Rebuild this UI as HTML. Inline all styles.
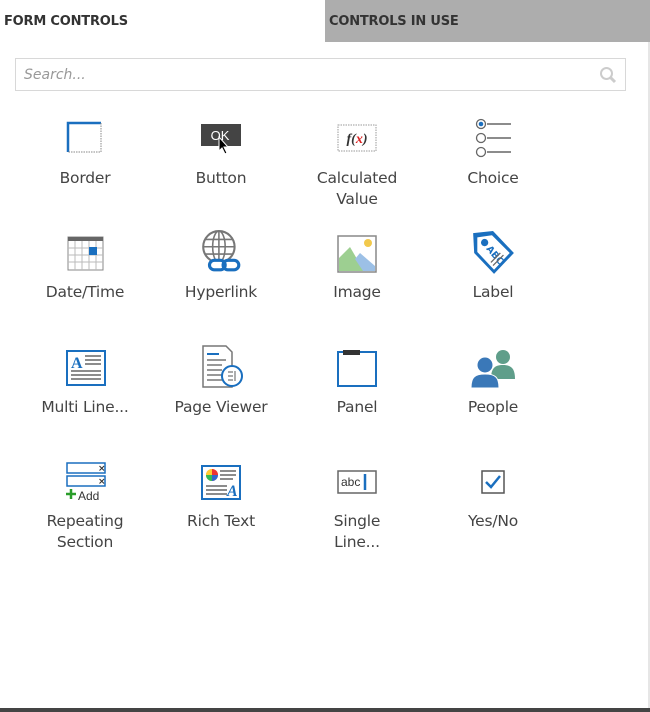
<!DOCTYPE html>
<html><head><meta charset="utf-8"><style>
body{margin:0;width:650px;height:712px;background:#fff;position:relative;overflow:hidden;font-family:"DejaVu Sans","Liberation Sans",sans-serif;}
.tab1{position:absolute;left:4px;top:14px;font-size:13px;font-weight:bold;color:#333;letter-spacing:-0.2px}
.tab2{position:absolute;left:325px;top:0;width:325px;height:42px;background:#adadad}
.tab2 span{position:absolute;left:4px;top:14px;font-size:13px;font-weight:bold;color:#333;letter-spacing:-0.2px}
.search{position:absolute;left:15px;top:58px;width:609px;height:31px;border:1px solid #d8d8d8}
.search span{position:absolute;left:8px;top:8px;font-size:14px;font-style:italic;color:#999}
.ic{position:absolute;width:136px;text-align:center}
.ic svg{display:block;margin:0 auto}
.lbl{position:absolute;width:136px;text-align:center;font-size:15.5px;color:#444;line-height:21px;letter-spacing:-0.2px}
.rb{position:absolute;left:648px;top:42px;width:2px;height:666px;background:#e6e6e6}
.bot{position:absolute;left:0;top:708px;width:650px;height:4px;background:#444}
</style></head><body>
<div class="tab1">FORM CONTROLS</div>
<div class="tab2"><span>CONTROLS IN USE</span></div>
<div class="search"><span>Search...</span>
<svg style="position:absolute;right:8px;top:7px" width="18" height="18" viewBox="0 0 18 18"><circle cx="7.5" cy="7.5" r="5.5" fill="none" stroke="#ccc" stroke-width="2"/><path d="M11.5 11.5L16 16" stroke="#ccc" stroke-width="3"/></svg></div>

<!-- row 1 -->
<div class="ic" style="left:17px;top:120px"><svg width="44" height="34" viewBox="0 0 40 34"><path d="M3 32V3H36" fill="none" stroke="#1a6fbf" stroke-width="2.5"/><path d="M36 3V32H3" fill="none" stroke="#888" stroke-width="1" stroke-dasharray="1.5 1"/></svg></div>
<div class="lbl" style="left:17px;top:168px">Border</div>
<div class="ic" style="left:153px;top:122px"><svg width="44" height="38" viewBox="0 0 44 38"><rect x="2" y="2" width="40" height="22" fill="#444"/><text x="21" y="18" font-size="13" fill="#fff" text-anchor="middle" font-family="Liberation Sans">OK</text><path d="M20 15L20 29L23 26L26 32L28 31L25 25L29 25Z" fill="#000" stroke="#fff" stroke-width="1"/></svg></div>
<div class="lbl" style="left:153px;top:168px">Button</div>
<div class="ic" style="left:289px;top:122px"><svg width="44" height="34" viewBox="0 0 44 34"><rect x="3" y="3" width="38" height="26" fill="#fff" stroke="#999" stroke-dasharray="1.5 1"/><text x="22" y="21" font-size="14" font-style="italic" font-weight="bold" text-anchor="middle" font-family="Liberation Serif" fill="#333">f(<tspan fill="#d22">x</tspan>)</text></svg></div>
<div class="lbl" style="left:289px;top:168px">Calculated<br>Value</div>
<div class="ic" style="left:425px;top:117px"><svg width="44" height="42" viewBox="0 0 44 42"><circle cx="10" cy="7" r="4.5" fill="#fff" stroke="#666" stroke-width="1.3"/><circle cx="10" cy="7" r="2.3" fill="#1a6fbf"/><circle cx="10" cy="21" r="4.5" fill="#fff" stroke="#666" stroke-width="1.3"/><circle cx="10" cy="35" r="4.5" fill="#fff" stroke="#666" stroke-width="1.3"/><path d="M16 7H40M16 21H40M16 35H40" stroke="#666" stroke-width="1.5"/></svg></div>
<div class="lbl" style="left:425px;top:168px">Choice</div>

<!-- row 2 -->
<div class="ic" style="left:17px;top:234px"><svg width="40" height="38" viewBox="0 0 40 38"><rect x="3" y="3" width="35" height="33" fill="#fff" stroke="#888"/><rect x="3" y="3" width="35" height="4" fill="#666"/><path d="M3 14H38M3 21H38M3 28H38M10 7V36M17 7V36M24 7V36M31 7V36" stroke="#bbb" stroke-width="1"/><rect x="24" y="13" width="8" height="8" fill="#1a6fbf"/></svg></div>
<div class="lbl" style="left:17px;top:282px">Date/Time</div>
<div class="ic" style="left:153px;top:229px"><svg width="46" height="46" viewBox="0 0 44 44"><circle cx="20" cy="17" r="15" fill="none" stroke="#777" stroke-width="2"/><ellipse cx="20" cy="17" rx="6" ry="15" fill="none" stroke="#777" stroke-width="1.5"/><path d="M5 17H35M7 10H33M7 24H33M20 2V32" stroke="#777" stroke-width="1.5"/><rect x="11" y="30" width="15" height="9" rx="4.5" fill="#fff" stroke="#1a6fbf" stroke-width="3"/><rect x="24" y="30" width="15" height="9" rx="4.5" fill="none" stroke="#1a6fbf" stroke-width="3"/></svg></div>
<div class="lbl" style="left:153px;top:282px">Hyperlink</div>
<div class="ic" style="left:289px;top:234px"><svg width="44" height="40" viewBox="0 0 44 40"><rect x="3" y="2" width="38" height="36" fill="#fff" stroke="#888" stroke-width="1.5"/><circle cx="33" cy="9" r="4" fill="#f2c94c"/><path d="M4 37V24L15 13L29 37Z" fill="#9dcf91"/><path d="M20 25L25 19L40 32V37H28Z" fill="#9cc0e6"/></svg></div>
<div class="lbl" style="left:289px;top:282px">Image</div>
<div class="ic" style="left:425px;top:230px"><svg width="46" height="46" viewBox="0 0 44 44"><path d="M3 3L22 1L42 22L23 42L4 22Z" fill="#1a6fbf"/><path d="M7 7L21 5L38 22L23 38L7 21Z" fill="#fff"/><circle cx="14" cy="12" r="3.5" fill="#1a6fbf"/><text x="24" y="27" font-size="9" font-weight="bold" fill="#1a6fbf" transform="rotate(50 24 24)" text-anchor="middle">ABC</text><path d="M20 31L29 22M22 34L32 24" stroke="#666" stroke-width="1.2"/></svg></div>
<div class="lbl" style="left:425px;top:282px">Label</div>

<!-- row 3 -->
<div class="ic" style="left:17px;top:348px"><svg width="44" height="40" viewBox="0 0 44 40"><rect x="4" y="3" width="38" height="34" fill="#fff" stroke="#1a6fbf" stroke-width="2"/><text x="8" y="20" font-size="16" font-weight="bold" fill="#1a6fbf" font-family="Liberation Serif">A</text><path d="M22 8H38M22 12H38M22 16H38M8 23H38M8 27H38M8 31H38" stroke="#666" stroke-width="1.5"/></svg></div>
<div class="lbl" style="left:17px;top:397px">Multi Line...</div>
<div class="ic" style="left:153px;top:344px"><svg width="48" height="46" viewBox="0 0 48 46"><path d="M6 2H29L35 8V43H6Z" fill="#fff" stroke="#777" stroke-width="1.5"/><path d="M10 10H22" stroke="#1a6fbf" stroke-width="2"/><path d="M10 16H29M10 21H25M10 26H25M10 31H25M10 36H25" stroke="#777" stroke-width="1.5"/><circle cx="35" cy="32" r="10" fill="#fff" stroke="#1a6fbf" stroke-width="2"/><path d="M31 28H36M31 32H36M31 36H36M38 27V37" stroke="#777" stroke-width="1.2"/></svg></div>
<div class="lbl" style="left:153px;top:397px">Page Viewer</div>
<div class="ic" style="left:289px;top:347px"><svg width="44" height="42" viewBox="0 0 44 42"><rect x="3" y="5" width="38" height="34" fill="#fff" stroke="#1a6fbf" stroke-width="2"/><rect x="8" y="3" width="17" height="5" fill="#333"/></svg></div>
<div class="lbl" style="left:289px;top:397px">Panel</div>
<div class="ic" style="left:425px;top:346px"><svg width="48" height="44" viewBox="0 0 48 42"><circle cx="34" cy="10" r="7" fill="#5f9e8a"/><path d="M22 32C22 21 26 18 34 18C42 18 46 21 46 32Z" fill="#5f9e8a"/><circle cx="16" cy="18" r="7.5" fill="#3a78b8"/><path d="M2 41C2 30 6 27 16 27C26 27 30 30 30 41Z" fill="#3a78b8" stroke="#fff" stroke-width="1"/></svg></div>
<div class="lbl" style="left:425px;top:397px">People</div>

<!-- row 4 -->
<div class="ic" style="left:17px;top:462px"><svg width="44" height="40" viewBox="0 0 44 40"><rect x="4" y="1" width="38" height="10" fill="#fff" stroke="#1a6fbf" stroke-width="1.5"/><rect x="4" y="14" width="38" height="10" fill="#fff" stroke="#1a6fbf" stroke-width="1.5"/><text x="35" y="9" font-size="9" font-weight="bold" fill="#333">×</text><text x="35" y="22" font-size="9" font-weight="bold" fill="#333">×</text><path d="M8 27V37M3 32H13" stroke="#2a9d2a" stroke-width="2.5"/><text x="15" y="38" font-size="12" fill="#333" font-family="Liberation Sans">Add</text></svg></div>
<div class="lbl" style="left:17px;top:511px">Repeating<br>Section</div>
<div class="ic" style="left:153px;top:464px"><svg width="44" height="38" viewBox="0 0 44 38"><rect x="3" y="2" width="38" height="33" fill="#fff" stroke="#1a6fbf" stroke-width="2"/><circle cx="13" cy="11" r="6" fill="#e84"/><path d="M13 5A6 6 0 0 1 19 11H13Z" fill="#e33"/><path d="M7 11A6 6 0 0 1 13 5V11Z" fill="#fc3"/><path d="M7 11A6 6 0 0 0 13 17V11Z" fill="#3b5"/><path d="M13 17A6 6 0 0 0 19 11H13Z" fill="#36c"/><path d="M21 7H37M21 11H37M21 15H34M7 22H28M7 26H28M7 30H28" stroke="#666" stroke-width="1.5"/><text x="28" y="32" font-size="16" font-style="italic" font-weight="bold" fill="#1a6fbf" font-family="Liberation Serif">A</text></svg></div>
<div class="lbl" style="left:153px;top:511px">Rich Text</div>
<div class="ic" style="left:289px;top:466px"><svg width="44" height="32" viewBox="0 0 44 32"><rect x="3" y="5" width="38" height="22" fill="#fff" stroke="#666" stroke-width="1.5"/><text x="6" y="20" font-size="12" fill="#333" font-family="Liberation Sans">abc</text><path d="M30 8V24" stroke="#1a6fbf" stroke-width="2.5"/></svg></div>
<div class="lbl" style="left:289px;top:511px">Single<br>Line...</div>
<div class="ic" style="left:425px;top:466px"><svg width="44" height="32" viewBox="0 0 44 32"><rect x="11" y="5" width="22" height="22" fill="#fff" stroke="#555" stroke-width="1.5"/><path d="M15 16L20 21L29 10" fill="none" stroke="#1a6fbf" stroke-width="2.5"/></svg></div>
<div class="lbl" style="left:425px;top:511px">Yes/No</div>

<div class="rb"></div>
<div class="bot"></div>
</body></html>
